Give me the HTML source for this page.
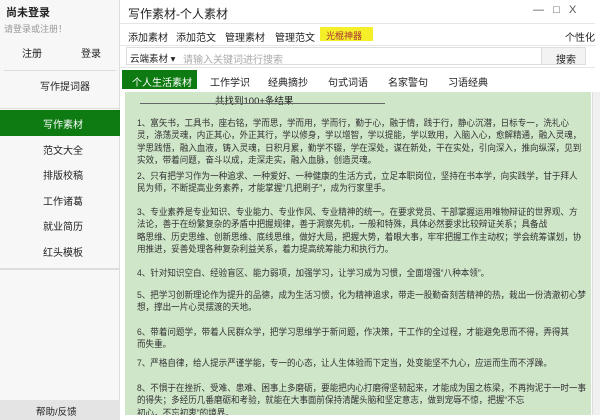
<!DOCTYPE html>
<html><head><meta charset="utf-8"><style>
*{margin:0;padding:0;box-sizing:border-box}
body{width:600px;height:420px;overflow:hidden;background:#fff;font-family:"Liberation Sans","Noto Sans CJK SC",sans-serif;font-size:10px;color:#222;position:relative}
.a{position:absolute;white-space:nowrap}
#side{position:absolute;left:0;top:0;width:120px;height:420px;background:#f7f7f7;border-right:1px solid #ddd}
#content{position:absolute;left:125px;top:92px;width:466px;height:323px;background:#cfe6c9;overflow:hidden}
p{position:absolute;left:12px;font-size:9.2px;line-height:12.3px;white-space:nowrap;color:#333;transform:scaleX(0.93);transform-origin:0 0}
</style></head><body>
<div id="side">
<div class="a" style="left:6px;top:4px;font-size:11px;font-weight:bold">尚未登录</div>
<div class="a" style="left:4px;top:22px;font-size:9px;color:#999">请登录或注册！</div>
<div class="a" style="left:22px;top:45px;font-size:10px">注册</div>
<div class="a" style="left:81px;top:45px;font-size:10px">登录</div>
<div class="a" style="left:4px;top:70px;width:112px;border-top:1px solid #ddd"></div>
<div class="a" style="left:40px;top:78px;font-size:10px">写作提词器</div>
<div class="a" style="left:0;top:108px;width:120px;border-top:1px solid #ddd"></div>
<div class="a" style="left:0;top:110px;width:120px;height:26px;background:#0d7a12"></div>
<div class="a" style="left:43px;top:116px;font-size:10px;color:#fff">写作素材</div>
<div class="a" style="left:43px;top:142px">范文大全</div>
<div class="a" style="left:43px;top:167px">排版校稿</div>
<div class="a" style="left:43px;top:193px">工作诸葛</div>
<div class="a" style="left:43px;top:218px">就业简历</div>
<div class="a" style="left:43px;top:244px">红头模板</div>
<div class="a" style="left:0;top:268px;width:120px;border-top:2px solid #ddd"></div>
<div class="a" style="left:0;top:400px;width:120px;height:20px;background:#e4e4e4"></div>
<div class="a" style="left:36px;top:404px;font-size:9.5px">帮助/反馈</div>
</div>
<div class="a" style="left:128px;top:5px;font-size:12px">写作素材-个人素材</div>
<div class="a" style="left:533px;top:4px;font-size:11px;color:#555">—&nbsp;&nbsp;&nbsp;□&nbsp;&nbsp;&nbsp;X</div>
<div class="a" style="left:120px;top:23px;width:475px;border-top:1px solid #e6e6e6"></div>
<div class="a" style="left:128px;top:29px">添加素材</div>
<div class="a" style="left:176px;top:29px">添加范文</div>
<div class="a" style="left:225px;top:29px">管理素材</div>
<div class="a" style="left:275px;top:29px">管理范文</div>
<div class="a" style="left:320px;top:27px;width:53px;height:14px;background:#f5ef2a"></div>
<div class="a" style="left:326px;top:29px;font-size:9px;color:#a33">光棍神器</div>
<div class="a" style="left:565px;top:29px">个性化</div>
<div class="a" style="left:120px;top:45px;width:475px;border-top:1px solid #e6e6e6"></div>
<div class="a" style="left:126px;top:47px;width:460px;height:18px;border:1px solid #ddd;background:#fff"></div>
<div class="a" style="left:130px;top:51px;font-size:9.5px">云端素材 ▾</div>
<div class="a" style="left:183px;top:51px;color:#aaa">请输入关键词进行搜索</div>
<div class="a" style="left:541px;top:47px;width:45px;height:18px;background:#f3f3f3;border:1px solid #ddd"></div>
<div class="a" style="left:556px;top:51px">搜索</div>
<div class="a" style="left:120px;top:67px;width:475px;border-top:1px solid #e6e6e6"></div>
<div class="a" style="left:122px;top:70px;width:75px;height:19px;background:#0d7a12"></div>
<div class="a" style="left:132px;top:74px;color:#fff">个人生活素材</div>
<div class="a" style="left:210px;top:74px">工作学识</div>
<div class="a" style="left:268px;top:74px">经典摘抄</div>
<div class="a" style="left:328px;top:74px">句式词语</div>
<div class="a" style="left:388px;top:74px">名家警句</div>
<div class="a" style="left:448px;top:74px">习语经典</div>
<div id="content">
<div class="a" style="left:90px;top:1px;font-size:9.5px">共找到100+条结果</div>
<div class="a" style="left:15px;top:11px;width:245px;border-top:1px solid #666"></div>
<p style="top:25px">1、富矢书，工具书，座右铭，学而思，学而用，学而行，勤于心，融于情，践于行，静心沉潜，日标专一，洗礼心<br>灵，涤荡灵魂，内正其心，外正其行，学以修身，学以增智，学以提能，学以致用，入脑入心，愈解精通，融入灵魂，<br>学思践悟，融入血液，铸入灵魂，日积月累，勤学不辍，学在深处，谋在新处，干在实处，引向深入，推向纵深，见到<br>实效，带着问题，奋斗以成，走深走实，融入血脉，创造灵魂。</p>
<p style="top:78px">2、只有把学习作为一种追求、一种爱好、一种健康的生活方式，立足本职岗位，坚持在书本学，向实践学，甘于拜人<br>民为师，不断提高业务素养，才能掌握“几把刷子”，成为行家里手。</p>
<p style="top:114px">3、专业素养是专业知识、专业能力、专业作风、专业精神的统一。在要求党员、干部掌握运用唯物辩证的世界观、方<br>法论，善于在纷繁复杂的矛盾中把握规律，善于洞察先机，一般和特殊，具体必然要求比较辩证关系；具备战<br>略思维、历史思维、创新思维、底线思维，做好大局，把握大势，着眼大事，牢牢把握工作主动权；学会统筹谋划，协<br>用推进，妥善处理各种复杂利益关系，着力提高统筹能力和执行力。</p>
<p style="top:175px">4、针对知识空白、经验盲区、能力弱项，加强学习，让学习成为习惯，全面增强“八种本领”。</p>
<p style="top:197px">5、把学习创新理论作为提升的品德，成为生活习惯，化为精神追求，带走一股勤奋刻苦精神的热，栽出一份清澈初心梦<br>想，撑出一片心灵摆渡的天地。</p>
<p style="top:234px">6、带着问题学，带着人民群众学，把学习思维学于新问题，作决策，干工作的全过程，才能避免思而不得，弄得其<br>而失重。</p>
<p style="top:265px">7、严格自律，给人提示严谨学能，专一的心态，让人生体验而下定当，处变能坚不九心，应运而生而不浮躁。</p>
<p style="top:290px">8、不惧于在挫折、受难、患难、困事上多磨砺，要能把内心打磨得坚韧起来，才能成为国之栋梁，不再拘泥于一时一事<br>的得失；多经历几番磨砺和考验，就能在大事面前保持清醒头脑和坚定意志，做到宠辱不惊，把握“不忘<br>初心，不忘初衷”的境界。</p>
</div>
<div class="a" style="left:592px;top:92px;width:8px;height:323px;background:#f0f0f0;border-left:1px solid #ddd"></div>
</body></html>
